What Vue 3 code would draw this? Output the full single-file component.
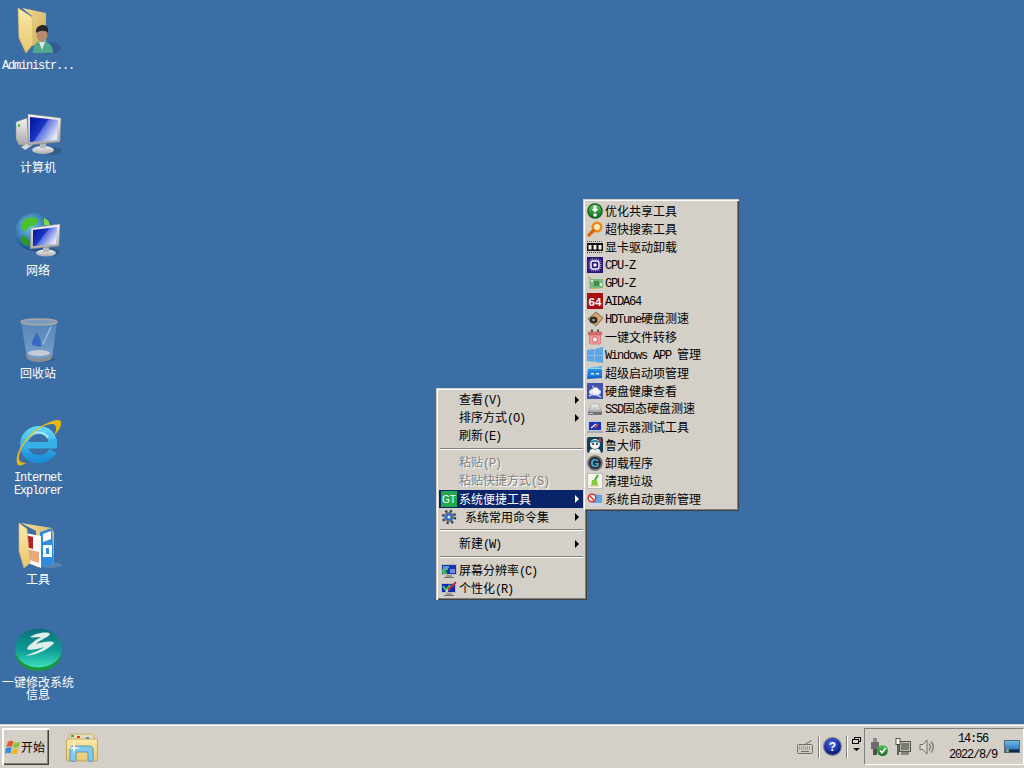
<script setup>
const desktopIcons = [
  { name: 'Administr...', icon: 'd-user' },
  { name: '计算机', icon: 'd-computer' },
  { name: '网络', icon: 'd-network' },
  { name: '回收站', icon: 'd-bin' },
  { name: 'Internet Explorer', icon: 'd-ie' },
  { name: '工具', icon: 'd-tools' },
  { name: '一键修改系统信息', icon: 'd-lens' }
]

const mainMenu = [
  { label: '查看(V)', arrow: true },
  { label: '排序方式(O)', arrow: true },
  { label: '刷新(E)' },
  { sep: true },
  { label: '粘贴(P)', disabled: true },
  { label: '粘贴快捷方式(S)', disabled: true },
  { label: '系统便捷工具', icon: 'm-gt', arrow: true, active: true },
  { label: '系统常用命令集', icon: 'm-gear', arrow: true, indent: true },
  { sep: true },
  { label: '新建(W)', arrow: true },
  { sep: true },
  { label: '屏幕分辨率(C)', icon: 'm-res' },
  { label: '个性化(R)', icon: 'm-pers' }
]

const subMenu = [
  { label: '优化共享工具', icon: 's-share' },
  { label: '超快搜索工具', icon: 's-search' },
  { label: '显卡驱动卸载', icon: 's-driver' },
  { label: 'CPU-Z', icon: 's-cpu' },
  { label: 'GPU-Z', icon: 's-gpu' },
  { label: 'AIDA64', icon: 's-aida' },
  { label: 'HDTune硬盘测速', icon: 's-hd' },
  { label: '一键文件转移', icon: 's-move' },
  { label: 'Windows APP 管理', icon: 's-win' },
  { label: '超级启动项管理', icon: 's-boot' },
  { label: '硬盘健康查看', icon: 's-health' },
  { label: 'SSD固态硬盘测速', icon: 's-ssd' },
  { label: '显示器测试工具', icon: 's-mon' },
  { label: '鲁大师', icon: 's-lu' },
  { label: '卸载程序', icon: 's-un' },
  { label: '清理垃圾', icon: 's-clean' },
  { label: '系统自动更新管理', icon: 's-upd' }
]

// SimSun-style mixed text: half-width Latin runs next to full-width CJK runs
function runs(text) {
  return text.match(/[\x00-\x7f]+|[^\x00-\x7f]+/g).map((t) => ({
    t,
    latin: /^[\x00-\x7f]/.test(t)
  }))
}
</script>

<template>
  <div class="screen">
    <svg class="defs" width="0" height="0" aria-hidden="true">
      <defs>
        <linearGradient id="gFolder" x1="0" y1="0" x2="0" y2="1"><stop offset="0" stop-color="#fbe9a8"/><stop offset="1" stop-color="#e9c66f"/></linearGradient>
        <linearGradient id="gFolderB" x1="0" y1="0" x2="1" y2="1"><stop offset="0" stop-color="#f3dc98"/><stop offset="1" stop-color="#cfa954"/></linearGradient>
        <linearGradient id="gScreen" x1="0" y1="0" x2="1" y2="0.6"><stop offset="0" stop-color="#00109c"/><stop offset="0.5" stop-color="#1a36c0"/><stop offset="0.55" stop-color="#5a6fe0"/><stop offset="1" stop-color="#e4e8fb"/></linearGradient>
        <linearGradient id="gSilver" x1="0" y1="0" x2="0" y2="1"><stop offset="0" stop-color="#f4f4f4"/><stop offset="1" stop-color="#a8a8a8"/></linearGradient>
        <linearGradient id="gBin" x1="0" y1="0" x2="0" y2="1"><stop offset="0" stop-color="#5f8fc0" stop-opacity=".7"/><stop offset="1" stop-color="#8fb0d0" stop-opacity=".8"/></linearGradient>
        <linearGradient id="gIe" x1="0" y1="0" x2="0" y2="1"><stop offset="0" stop-color="#5fd4f7"/><stop offset="1" stop-color="#1c8fd8"/></linearGradient>
        <linearGradient id="gGold" x1="0" y1="0" x2="1" y2="1"><stop offset="0" stop-color="#f7d21e"/><stop offset="1" stop-color="#d99c07"/></linearGradient>
        <linearGradient id="gLens" x1="0" y1="0" x2="0" y2="1"><stop offset="0" stop-color="#0b6f78"/><stop offset="0.55" stop-color="#0e9c96"/><stop offset="1" stop-color="#3fe0c0"/></linearGradient>
        <linearGradient id="gGreen" x1="0" y1="0" x2="0" y2="1"><stop offset="0" stop-color="#5bc45a"/><stop offset="1" stop-color="#0d6d22"/></linearGradient>
        <linearGradient id="gBlue" x1="0" y1="0" x2="0" y2="1"><stop offset="0" stop-color="#3ba5ee"/><stop offset="1" stop-color="#0c5ec4"/></linearGradient>
        <linearGradient id="gDesk" x1="0" y1="0" x2="0" y2="1"><stop offset="0" stop-color="#6fc0e8"/><stop offset="1" stop-color="#1a5fb0"/></linearGradient>
        <radialGradient id="gGlobe" cx="0.4" cy="0.35" r="0.7"><stop offset="0" stop-color="#6ec7ea"/><stop offset="1" stop-color="#123f8a"/></radialGradient>

        <symbol id="d-user" viewBox="0 0 48 48">
          <polygon points="8,2 32,7 32,36 18,40 18,10" fill="url(#gFolderB)"/>
          <polygon points="4,2 18,11 19,38 12,47 5,32" fill="url(#gFolder)" stroke="#d8b765" stroke-width=".6"/>
          <ellipse cx="36" cy="42" rx="11" ry="6" fill="#2b517d" opacity=".55"/>
          <path d="M19 47 C19 38 23 35 28 35 C33 35 39 38 39 47 Z" fill="#4ea88c"/>
          <path d="M25 36 L28 44 L31 36 Z" fill="#dfeae6"/>
          <ellipse cx="28" cy="29" rx="5.5" ry="6.5" fill="#b78a6a"/>
          <path d="M22 27 C21 21 26 19 29 19 C33 19 35 22 34 27 C32 24 26 24 22 27 Z" fill="#272727"/>
        </symbol>

        <symbol id="d-computer" viewBox="0 0 48 48">
          <polygon points="2,13 13,9 15,36 5,36 2,30" fill="url(#gSilver)" stroke="#8a8a8a" stroke-width=".5"/>
          <rect x="4" y="15" width="2" height="3" fill="#3fce3f"/>
          <polygon points="7,38 16,33 20,35 11,41" fill="#d6d6d6"/>
          <ellipse cx="38" cy="42" rx="10" ry="4" fill="#2b517d" opacity=".6"/>
          <ellipse cx="29" cy="41" rx="11" ry="4" fill="url(#gSilver)"/>
          <rect x="26" y="33" width="6" height="6" fill="#b9b9b9"/>
          <polygon points="14,5 47,9 46,33 14,36" fill="url(#gSilver)" stroke="#7d7d7d" stroke-width=".5"/>
          <polygon points="16,8 44,11 43,31 16,33" fill="url(#gScreen)"/>
        </symbol>

        <symbol id="d-network" viewBox="0 0 48 48">
          <circle cx="20" cy="20" r="19" fill="url(#gGlobe)"/>
          <path d="M11 7 C16 4 23 5 25 8 C22 11 23 14 18 14 C14 14 14 20 10 19 C6 17 7 10 11 7 Z" fill="#4cc12f"/>
          <path d="M7 24 C11 23 15 27 15 31 C15 35 13 35 11 33 C8 31 6 29 7 24 Z" fill="#2f9a20"/>
          <path d="M30 6 C34 7 36 11 36 14 L30 13 Z" fill="#7ed84a"/>
          <ellipse cx="36" cy="40" rx="10" ry="4" fill="#2b517d" opacity=".6"/>
          <ellipse cx="32" cy="41" rx="10" ry="3.5" fill="url(#gSilver)"/>
          <rect x="29" y="35" width="6" height="5" fill="#b9b9b9"/>
          <polygon points="17,16 46,12 45,34 16,37" fill="url(#gSilver)" stroke="#7d7d7d" stroke-width=".5"/>
          <polygon points="19,18 43,15 42,32 19,34" fill="url(#gScreen)"/>
        </symbol>

        <symbol id="d-bin" viewBox="0 0 48 48">
          <ellipse cx="30" cy="44" rx="11" ry="3" fill="#2b517d" opacity=".6"/>
          <path d="M7 7 L13 43 C16 48 34 48 38 43 L43 7 Z" fill="url(#gBin)"/>
          <path d="M22 17 C25 20 28 27 27 32 L18 30 C17 26 21 23 22 17 Z" fill="#2d62c0" opacity=".85"/>
          <path d="M37 12 L29 29" stroke="#c6d8ea" stroke-width="1.5" opacity=".6"/>
          <ellipse cx="25" cy="38" rx="11" ry="3" fill="#c3ccd4"/>
          <path d="M12 39 C16 45 34 45 38 39 L38 43 C34 48 16 48 13 43 Z" fill="#8a8e92"/>
          <ellipse cx="25" cy="7" rx="18" ry="3" fill="#7d9cbd" stroke="#a8a8a8" stroke-width="1.4"/>
        </symbol>

        <symbol id="d-ie" viewBox="0 0 48 48">
          <path d="M39 27 C39 17 33 12 25 12 C16 12 10 19 10 27 C10 35 16 41 25 41 C31 41 36 38 39 33" stroke="url(#gIe)" stroke-width="8" fill="none"/>
          <rect x="10" y="24" width="33" height="6.500" fill="#36b2e8"/>
          <rect x="36" y="21" width="7" height="6" fill="#36b2e8"/>
          <path d="M16 18 C21 13 30 13 34 20" stroke="#a5eafb" stroke-width="2" fill="none"/>
          <path d="M4 47 C-1 40 8 22 23 11 C33 4 46 -1 47 4 C48 8 44 14 40 18 C43 11 43 6 38 6 C26 6 8 24 5 38 C4 42 6 45 12 45 C9 47 6 48 4 47 Z" fill="url(#gGold)"/>
        </symbol>

        <symbol id="d-tools" viewBox="0 0 48 48">
          <ellipse cx="36" cy="44" rx="12" ry="3" fill="#6f93b8" opacity=".6"/>
          <polygon points="7,2 38,7 40,12 40,43 22,46 22,10" fill="url(#gFolderB)"/>
          <polygon points="26,11 38,7 40,43 26,47" fill="#2f8de0"/>
          <rect x="29" y="24" width="9" height="12" fill="#fff"/>
          <rect x="32" y="27" width="3" height="6" fill="#2f8de0"/>
          <polygon points="29,13 37,10 37,18 29,21" fill="#fff"/>
          <polygon points="11,12 27,15 27,47 11,41" fill="#fff"/>
          <polygon points="12,14 19,16 19,28 12,26" fill="#b4202c"/>
          <polygon points="12,28 25,31 25,42 12,38" fill="#eaa97a"/>
          <polygon points="5,2 13,8 16,42 10,47 5,30" fill="url(#gFolder)" stroke="#d8b765" stroke-width=".6"/>
        </symbol>

        <symbol id="d-lens" viewBox="0 0 48 48">
          <ellipse cx="24.500" cy="27" rx="23.500" ry="20" fill="#169a3a"/>
          <ellipse cx="24.500" cy="24" rx="23.500" ry="19.500" fill="url(#gLens)"/>
          <path d="M16 13 C22 9 34 7 36 10 C35 13 27 15 22 20 C29 18 38 16 40 19 C36 24 24 31 12 32 C20 28 27 26 30 23 C24 25 16 27 13 25 C14 21 22 16 27 13 C23 13 19 14 16 13 Z" fill="#dfeee8"/>
        </symbol>

        <symbol id="m-gt" viewBox="0 0 16 16">
          <rect x="0" y="0" width="16" height="16" fill="#21a84d"/>
          <text x="8" y="12" text-anchor="middle" font-family="Liberation Sans, sans-serif" font-size="10" fill="#fff">GT</text>
        </symbol>
        <symbol id="m-gear" viewBox="0 0 16 16">
          <circle cx="8" cy="8" r="6" fill="none" stroke="#3d4350" stroke-width="2.500" stroke-dasharray="2.360 2.360"/>
          <circle cx="8" cy="8" r="5" fill="#6d7484"/>
          <circle cx="8" cy="8" r="3.400" fill="#2c6fd2"/>
          <circle cx="8" cy="8" r="1.500" fill="#dfe9f7"/>
        </symbol>
        <symbol id="m-res" viewBox="0 0 16 16">
          <rect x="0" y="1" width="16" height="11" fill="#b9b9b9"/>
          <rect x="1" y="2" width="14" height="9" fill="#0f38b8"/>
          <path d="M2 4 L8 4 M2 6 L7 6 M9 7 H14 M9 9 H14" stroke="#cfe0ff" stroke-width="1"/>
          <path d="M7 4 L3 9 M2 6 V10 H6" stroke="#46d146" stroke-width="1.500" fill="none"/>
          <rect x="5" y="12" width="6" height="2" fill="#9a9a9a"/>
          <rect x="3" y="14" width="10" height="1" fill="#6b6b6b"/>
        </symbol>
        <symbol id="m-pers" viewBox="0 0 16 16">
          <rect x="0" y="2" width="15" height="10" fill="#b9b9b9"/>
          <rect x="1" y="3" width="13" height="8" fill="#0f2cb0"/>
          <path d="M2 5 L5 9 L9 4" stroke="#46d146" stroke-width="2" fill="none"/>
          <path d="M15 1 L7 9" stroke="#d7263d" stroke-width="2"/>
          <path d="M7 9 L5 11" stroke="#fff" stroke-width="1.500"/>
          <rect x="5" y="12" width="6" height="2" fill="#9a9a9a"/>
          <rect x="3" y="14" width="10" height="1" fill="#6b6b6b"/>
        </symbol>

        <symbol id="s-share" viewBox="0 0 16 16">
          <circle cx="8" cy="8" r="7.800" fill="#0c5b1e"/>
          <circle cx="8" cy="8" r="6.600" fill="url(#gGreen)"/>
          <path d="M6.500 2.500 H9.500 V6 H11.500 L8 9.500 L4.500 6 H6.500 Z" fill="#fff"/>
          <circle cx="8" cy="12" r="1.800" fill="#fff"/>
        </symbol>
        <symbol id="s-search" viewBox="0 0 16 16">
          <circle cx="10" cy="6" r="4.300" fill="#fde7b8" stroke="#ee8a1c" stroke-width="2.400"/>
          <path d="M6.500 9.500 L2 14" stroke="#d9640c" stroke-width="3.200" stroke-linecap="round"/>
        </symbol>
        <symbol id="s-driver" viewBox="0 0 16 16">
          <path d="M0 2.500 H16" stroke="#555" stroke-width="1" stroke-dasharray="1 1"/>
          <rect x="0" y="4" width="16" height="8" fill="#111"/>
          <rect x="1.500" y="6" width="3" height="4.500" fill="#eee"/>
          <rect x="6.500" y="6" width="3" height="4.500" fill="#eee"/>
          <rect x="11.500" y="6" width="3" height="4.500" fill="#eee"/>
          <path d="M0 13.500 H16" stroke="#333" stroke-width="1" stroke-dasharray="1 1"/>
        </symbol>
        <symbol id="s-cpu" viewBox="0 0 16 16">
          <rect width="16" height="16" fill="#2a1478"/>
          <rect x="4" y="4" width="8" height="8" rx="2" fill="none" stroke="#fff" stroke-width="1.400"/>
          <rect x="6.500" y="6.500" width="3" height="3" fill="#fff"/>
          <rect x="2.200" y="2.200" width="11.600" height="11.600" rx="3" fill="none" stroke="#d6ccff" stroke-width="1" stroke-dasharray="1 1"/>
        </symbol>
        <symbol id="s-gpu" viewBox="0 0 16 16">
          <path d="M1 2 L3 3 V14" stroke="#9aa59a" stroke-width="1.200" fill="none"/>
          <rect x="3" y="4" width="13" height="9" fill="#78b878"/>
          <rect x="7" y="6" width="5" height="5" fill="#3f8a4c"/>
          <rect x="4" y="5" width="2" height="2" fill="#d9eed4"/>
          <rect x="13" y="8" width="2" height="3" fill="#d9eed4"/>
          <path d="M4 13.500 H12" stroke="#c8b558" stroke-width="1"/>
        </symbol>
        <symbol id="s-aida" viewBox="0 0 16 16">
          <rect width="16" height="16" fill="#a80f12"/>
          <text x="8" y="12.500" text-anchor="middle" font-family="Liberation Sans, sans-serif" font-size="11.500" font-weight="700" fill="#fff">64</text>
        </symbol>
        <symbol id="s-hd" viewBox="0 0 16 16">
          <polygon points="9,1 16,7 9,15 1,8" fill="#d8a766" stroke="#5c4a30" stroke-width=".7"/>
          <ellipse cx="6.500" cy="9" rx="4" ry="3.600" fill="#35302c"/>
          <circle cx="6.500" cy="9" r="1.100" fill="#cfcfcf"/>
        </symbol>
        <symbol id="s-move" viewBox="0 0 16 16">
          <rect x="4" y="0.500" width="2" height="3" fill="#555"/>
          <rect x="10" y="0.500" width="2" height="3" fill="#555"/>
          <rect x="1.500" y="3" width="13" height="3" fill="#e8646c" stroke="#8e6a52" stroke-width=".6"/>
          <rect x="2.500" y="6" width="11" height="9" rx="1" fill="#f49a9a" stroke="#c46060" stroke-width=".6"/>
          <circle cx="8" cy="10.500" r="2.600" fill="#fff" stroke="#c43838" stroke-width=".8"/>
        </symbol>
        <symbol id="s-win" viewBox="0 0 16 16">
          <polygon points="0,3 7.500,2 7.500,8 0,8" fill="#5aa6ea"/>
          <polygon points="8,2 16,0 16,8 8,8" fill="#5aa6ea"/>
          <polygon points="0,8.500 7.500,8.500 7.500,15 0,14" fill="#5aa6ea"/>
          <polygon points="8,8.500 16,8.500 16,16 8,15" fill="#5aa6ea"/>
        </symbol>
        <symbol id="s-boot" viewBox="0 0 16 16">
          <polygon points="1,3 15,1 15,13 0,14" fill="url(#gBlue)"/>
          <rect x="1" y="6" width="14" height="5" fill="#1d7fe0"/>
          <rect x="4" y="8" width="3" height="1.500" fill="#dff0ff"/>
          <rect x="9" y="8" width="3" height="1.500" fill="#dff0ff"/>
          <rect x="1" y="2.500" width="14" height="1.500" fill="#8fd4ff"/>
        </symbol>
        <symbol id="s-health" viewBox="0 0 16 16">
          <rect width="16" height="16" fill="#4352ad"/>
          <ellipse cx="8" cy="9" rx="6" ry="3.500" fill="#e7ecf6"/>
          <circle cx="8.500" cy="7" r="2.800" fill="#fff"/>
          <path d="M2 13 L6 11 M10 12 L14 14" stroke="#b8c6ea" stroke-width="1.400"/>
          <circle cx="6" cy="3.500" r="1" fill="#b8c6ea"/>
        </symbol>
        <symbol id="s-ssd" viewBox="0 0 16 16">
          <polygon points="4.500,3 11.500,3 15,11 1,11" fill="url(#gSilver)" stroke="#8c8c8c" stroke-width=".5"/>
          <rect x="1" y="11" width="14" height="3" fill="#737373"/>
          <rect x="2" y="12" width="4" height="1" fill="#c8c8c8"/>
        </symbol>
        <symbol id="s-mon" viewBox="0 0 16 16">
          <rect x="1" y="2" width="14" height="10" fill="#c3c8dc"/>
          <rect x="2" y="3" width="12" height="8" fill="#1a34b4"/>
          <path d="M4 9 L9 5" stroke="#f7f7f7" stroke-width="1.200"/>
          <path d="M8 9 L11 5" stroke="#e5484d" stroke-width="1.500"/>
          <rect x="0" y="12" width="16" height="2" fill="#a6a9b8"/>
        </symbol>
        <symbol id="s-lu" viewBox="0 0 16 16">
          <rect width="16" height="16" rx="2" fill="#123f56"/>
          <circle cx="8" cy="7" r="5" fill="#f2f2f2"/>
          <path d="M3 6 C4 2 12 2 13 6 L8 5 Z" fill="#2a7fa4"/>
          <circle cx="6" cy="7" r="1" fill="#222"/>
          <circle cx="10" cy="7" r="1" fill="#222"/>
          <path d="M2 16 C3 11 6 11 8 13 C10 11 13 11 14 16 Z" fill="#e8e8e8"/>
          <rect x="12" y="1" width="2" height="4" fill="#d93a2b"/>
        </symbol>
        <symbol id="s-un" viewBox="0 0 16 16">
          <circle cx="8" cy="8" r="7.800" fill="#6f6f6f"/>
          <circle cx="8" cy="8" r="6" fill="#2b2b30"/>
          <text x="8" y="12" text-anchor="middle" font-family="Liberation Sans, sans-serif" font-size="11" font-weight="700" fill="#3fb6f2">G</text>
        </symbol>
        <symbol id="s-clean" viewBox="0 0 16 16">
          <rect x="0.500" y="0.500" width="15" height="15" fill="#f6f6ee" stroke="#bcbcb4"/>
          <path d="M11 2 L8 7" stroke="#3caa2e" stroke-width="2"/>
          <path d="M5 7 L10 7 L11 13 L4 13 Z" fill="#82c93c"/>
          <path d="M2 13 H12" stroke="#e3d79c" stroke-width="1.500"/>
        </symbol>
        <symbol id="s-upd" viewBox="0 0 16 16">
          <polygon points="6,3 15,4 15,12 6,12" fill="#5fa6e4"/>
          <polygon points="3,12 15,12 16,15 4,15" fill="#cfd6e6"/>
          <circle cx="5" cy="7" r="3.800" fill="#fff" stroke="#d8342c" stroke-width="1.500"/>
          <path d="M2.500 4.500 L7.500 9.500" stroke="#d8342c" stroke-width="1.500"/>
        </symbol>

        <symbol id="t-flag" viewBox="0 0 16 16">
          <path d="M3 3 C5 1.500 7 1.500 8.500 2.500 L7 8 C5 7 3 7 1 8.500 Z" fill="#e2562b"/>
          <path d="M9.500 3 C11 4 13 4 15.500 2 L14 7.500 C12 9.500 10 9.500 8 8.500 Z" fill="#8cc63f"/>
          <path d="M0.700 9.500 C3 8 5 8 6.800 9 L5.300 14.500 C3.500 13.500 1.500 13.500 0 15 Z" fill="#2f8fd6"/>
          <path d="M7.800 9.500 C10 10.500 12 10.500 13.800 8.800 L12.300 14.500 C10 15.500 8 15.500 6.300 14.500 Z" fill="#f5b81c"/>
        </symbol>
        <symbol id="t-explorer" viewBox="0 0 32 32">
          <rect x="3" y="1" width="25" height="10" rx="1" fill="#e9dcae" stroke="#bba468" stroke-width=".7"/>
          <rect x="5" y="2" width="3" height="2" fill="#23b83a"/>
          <rect x="11" y="3" width="3" height="2" fill="#d13a2a"/>
          <rect x="20" y="4" width="3" height="2" fill="#2c8fe0"/>
          <rect x="0.500" y="6" width="31" height="22" rx="1.500" fill="url(#gFolder)" stroke="#b99c57" stroke-width=".8"/>
          <path d="M4 18 C4 14 5 13 8 13 H23 C27 13 27 15 27 18 V27 C27 29 22 29 22 27 V21 C22 19 21 19 20 19 H12 C10 19 10 20 10 21 V27 C10 29 4 29 4 27 Z" fill="#85c8e8" stroke="#3d8ab6" stroke-width=".8"/>
          <path d="M7 14 L8 8 L9 14 L15 15 L9 16 L8 21 L7 16 L2 15 Z" fill="#fff" opacity=".9"/>
        </symbol>
        <symbol id="t-keyboard" viewBox="0 0 16 16">
          <path d="M14 1 C14 4 9 3 8 6" stroke="#77776f" stroke-width="1.200" fill="none"/>
          <rect x="0.500" y="5.500" width="15" height="9" rx="1" fill="#cfcdc5" stroke="#6f6f69"/>
          <path d="M2 8 H14 M2 10 H14" stroke="#6f6f69" stroke-dasharray="1 1"/>
          <path d="M4 12.500 H12" stroke="#6f6f69"/>
        </symbol>
        <symbol id="t-mini" viewBox="0 0 9 16">
          <rect x="2.500" y="0.500" width="6" height="4" fill="none" stroke="#000"/>
          <rect x="0.500" y="2.500" width="6" height="4" fill="#d4d0c8" stroke="#000"/>
          <polygon points="1,11 8,11 4.500,14" fill="#000"/>
        </symbol>
        <symbol id="t-usb" viewBox="0 0 18 18">
          <rect x="3" y="0" width="4" height="4" fill="#8c8c8c"/>
          <rect x="1" y="4" width="8" height="7" fill="#6c6c6c"/>
          <rect x="3" y="11" width="4" height="6" fill="#4d4d4d"/>
          <circle cx="12.500" cy="12.500" r="5.500" fill="url(#gGreen)"/>
          <path d="M10 12.500 L12 15 L15.500 10" stroke="#fff" stroke-width="1.600" fill="none"/>
        </symbol>
        <symbol id="t-net" viewBox="0 0 16 18">
          <rect x="4.500" y="3.500" width="11" height="10" fill="#bcbab2" stroke="#55554f"/>
          <rect x="6" y="5" width="8" height="7" fill="#7c7c75"/>
          <rect x="6" y="14" width="8" height="3" fill="#85857f"/>
          <rect x="1" y="0.500" width="4" height="6" fill="#fff" stroke="#55554f"/>
          <path d="M3 6 V17" stroke="#3f3f3a" stroke-width="1.500"/>
        </symbol>
        <symbol id="t-vol" viewBox="0 0 16 18">
          <polygon points="1,6.500 4,6.500 8,2 8,16 4,11.500 1,11.500" fill="#d9d7cf" stroke="#6f6f69"/>
          <path d="M10 5.500 C11.500 7.500 11.500 10.500 10 12.500 M12 3.500 C15 6.500 15 11.500 12 14.500" stroke="#6f6f69" stroke-width="1.200" fill="none"/>
        </symbol>
        <symbol id="t-desk" viewBox="0 0 16 16">
          <rect x="0.500" y="1.500" width="15" height="12" fill="url(#gDesk)" stroke="#4f6478"/>
          <rect x="5" y="10.500" width="10" height="2.500" fill="#10284e"/>
          <rect x="1.500" y="10" width="1.500" height="1.500" fill="#e8632c"/>
          <rect x="3" y="10" width="1.500" height="1.500" fill="#8cc63f"/>
          <rect x="1.500" y="11.500" width="1.500" height="1.500" fill="#2f8fd6"/>
          <rect x="3" y="11.500" width="1.500" height="1.500" fill="#f5b81c"/>
        </symbol>
      </defs>
    </svg>

    <main class="desktop">
      <ul class="icons">
        <li v-for="d in desktopIcons" :key="d.name" class="icon-cell">
          <svg class="icon-art" width="48" height="48"><use :href="'#' + d.icon"/></svg>
          <span class="icon-label"><span v-for="(r, i) in runs(d.name)" :key="i" :class="r.latin ? 'latin' : 'cjk'">{{ r.t }}</span></span>
        </li>
      </ul>

      <div class="menu main-menu">
        <template v-for="(m, i) in mainMenu" :key="i">
          <div v-if="m.sep" class="sep"></div>
          <div v-else class="row" :class="{ active: m.active, disabled: m.disabled }">
            <svg v-if="m.icon" class="row-icon" width="16" height="16"><use :href="'#' + m.icon"/></svg>
            <span v-else class="row-icon"></span>
            <span class="row-text" :class="{ indent: m.indent }"><span v-for="(r, j) in runs(m.label)" :key="j" :class="r.latin ? 'latin' : 'cjk'">{{ r.t }}</span></span>
            <i v-if="m.arrow" class="arrow"></i>
          </div>
        </template>
      </div>

      <div class="menu sub-menu">
        <div v-for="s in subMenu" :key="s.label" class="row">
          <svg class="row-icon" width="16" height="16"><use :href="'#' + s.icon"/></svg>
          <span class="row-text"><span v-for="(r, j) in runs(s.label)" :key="j" :class="r.latin ? 'latin' : 'cjk'">{{ r.t }}</span></span>
        </div>
      </div>
    </main>

    <footer class="taskbar">
      <button class="start">
        <svg width="16" height="16"><use href="#t-flag"/></svg>
        <span class="cjk start-text">开始</span>
      </button>
      <svg class="explorer" width="32" height="32"><use href="#t-explorer"/></svg>

      <div class="quick">
        <svg width="16" height="16"><use href="#t-keyboard"/></svg>
        <span class="grip"></span>
        <span class="help"><span class="help-mark">?</span></span>
        <span class="grip"></span>
        <svg class="mini" width="9" height="16"><use href="#t-mini"/></svg>
      </div>

      <div class="tray">
        <svg width="18" height="18"><use href="#t-usb"/></svg>
        <svg class="tray-net" width="16" height="18"><use href="#t-net"/></svg>
        <svg class="tray-vol" width="16" height="18"><use href="#t-vol"/></svg>
        <div class="clock">
          <span class="latin">14:56</span>
          <span class="latin">2022/8/9</span>
        </div>
        <svg class="tray-desk" width="16" height="16"><use href="#t-desk"/></svg>
      </div>
    </footer>
  </div>
</template>

<style scoped>
.screen {
  position: relative;
  width: 1024px;
  height: 768px;
  overflow: hidden;
  display: flex;
  flex-direction: column;
  background: #3a6ea5;
  font-family: "Noto Sans CJK SC", "Liberation Mono", monospace;
  font-size: 12px;
  color: #000;
}
.defs { position: absolute; }
.latin {
  font-family: "Liberation Mono", "DejaVu Sans Mono", monospace;
  font-size: 12px;
  letter-spacing: -1.2px;
  white-space: pre;
}
.cjk { font-family: "Noto Sans CJK SC", sans-serif; font-size: 12px; }

.desktop { position: relative; flex: 1; min-height: 0; }
.icons {
  list-style: none;
  margin: 0;
  padding: 6px 0 0;
  width: 76px;
  display: flex;
  flex-direction: column;
}
.icon-cell {
  height: 103px;
  display: flex;
  flex-direction: column;
  align-items: center;
}
.icon-art { flex: none; }
.icon-label {
  margin-top: 4px;
  width: 76px;
  text-align: center;
  line-height: 12px;
  color: #fff;
  word-break: break-all;
}
.icon-label .latin {
  white-space: normal;
  word-break: normal;
  line-height: 10px;
}

.menu {
  position: absolute;
  box-sizing: border-box;
  padding: 3px;
  background: #d4d0c8;
  box-shadow: inset 1px 1px 0 #d4d0c8, inset 2px 2px 0 #fff, inset -1px -1px 0 #404040, inset -2px -2px 0 #808080;
}
.main-menu { left: 436px; top: 388px; width: 151px; height: 212px; }
.sub-menu { left: 583px; top: 199px; width: 156px; height: 312px; z-index: 1; padding-left: 4px; }
.row {
  height: 18px;
  display: flex;
  align-items: center;
  line-height: 18px;
  white-space: nowrap;
}
.row-icon { flex: none; width: 16px; height: 16px; margin-right: 2px; }
.main-menu .row-icon { margin-left: 2px; }
.indent { margin-left: 6px; }
.row.active { background: #0a246a; color: #fff; }
.row.disabled { color: #808080; text-shadow: 1px 1px 0 #fff; }
.arrow {
  margin-left: auto;
  margin-right: 5px;
  width: 0;
  height: 0;
  border-left: 4px solid currentColor;
  border-top: 4px solid transparent;
  border-bottom: 4px solid transparent;
}
.sep {
  height: 1px;
  margin: 3px 1px 5px;
  background: #808080;
  box-shadow: 0 1px 0 #fff;
}

.taskbar {
  flex: none;
  box-sizing: border-box;
  height: 44px;
  display: flex;
  align-items: flex-start;
  padding-top: 2px;
  background: #d4d0c8;
  box-shadow: inset 0 1px 0 #d4d0c8, inset 0 2px 0 #fff;
}
.start {
  margin: 2px 0 0 2px;
  box-sizing: border-box;
  width: 47px;
  height: 37px;
  padding: 0 0 0 3px;
  display: flex;
  align-items: center;
  background: #d4d0c8;
  border: 0;
  box-shadow: inset 2px 2px 0 #fff, inset -1px -1px 0 #404040, inset -2px -2px 0 #808080;
}
.start-text { color: #000; }
.explorer { margin: 7px 0 0 17px; }
.quick {
  margin: 2px 3px 0 auto;
  height: 37px;
  display: flex;
  align-items: center;
}
.grip {
  width: 1px;
  height: 22px;
  margin: 0 4px 0 5px;
  background: #808080;
  box-shadow: 1px 0 0 #fff;
}
.help {
  width: 17px;
  height: 17px;
  border-radius: 50%;
  display: flex;
  align-items: center;
  justify-content: center;
  background: radial-gradient(circle at 45% 35%, #4a6cf0, #0a1b80 70%);
  box-shadow: 0 0 0 1px #7f8088;
  margin: 0 0 0 1px;
}
.help-mark {
  color: #fff;
  font-family: "Liberation Sans", sans-serif;
  font-size: 12px;
  font-weight: 700;
}
.mini { margin: 0 0 4px 1px; }
.tray {
  margin-top: 2px;
  box-sizing: border-box;
  width: 160px;
  height: 37px;
  padding-left: 5px;
  display: flex;
  align-items: center;
  border: 1px solid;
  border-color: #808080 #fff #fff #808080;
}
.tray-net { margin-left: 7px; }
.tray-vol { margin-left: 8px; }
.clock {
  margin-left: 10px;
  width: 56px;
  display: flex;
  flex-direction: column;
  align-items: center;
  gap: 4px;
  line-height: 12px;
}
.tray-desk { margin-left: 3px; }
</style>

<style>
html, body { margin: 0; background: #3a6ea5; }
</style>
